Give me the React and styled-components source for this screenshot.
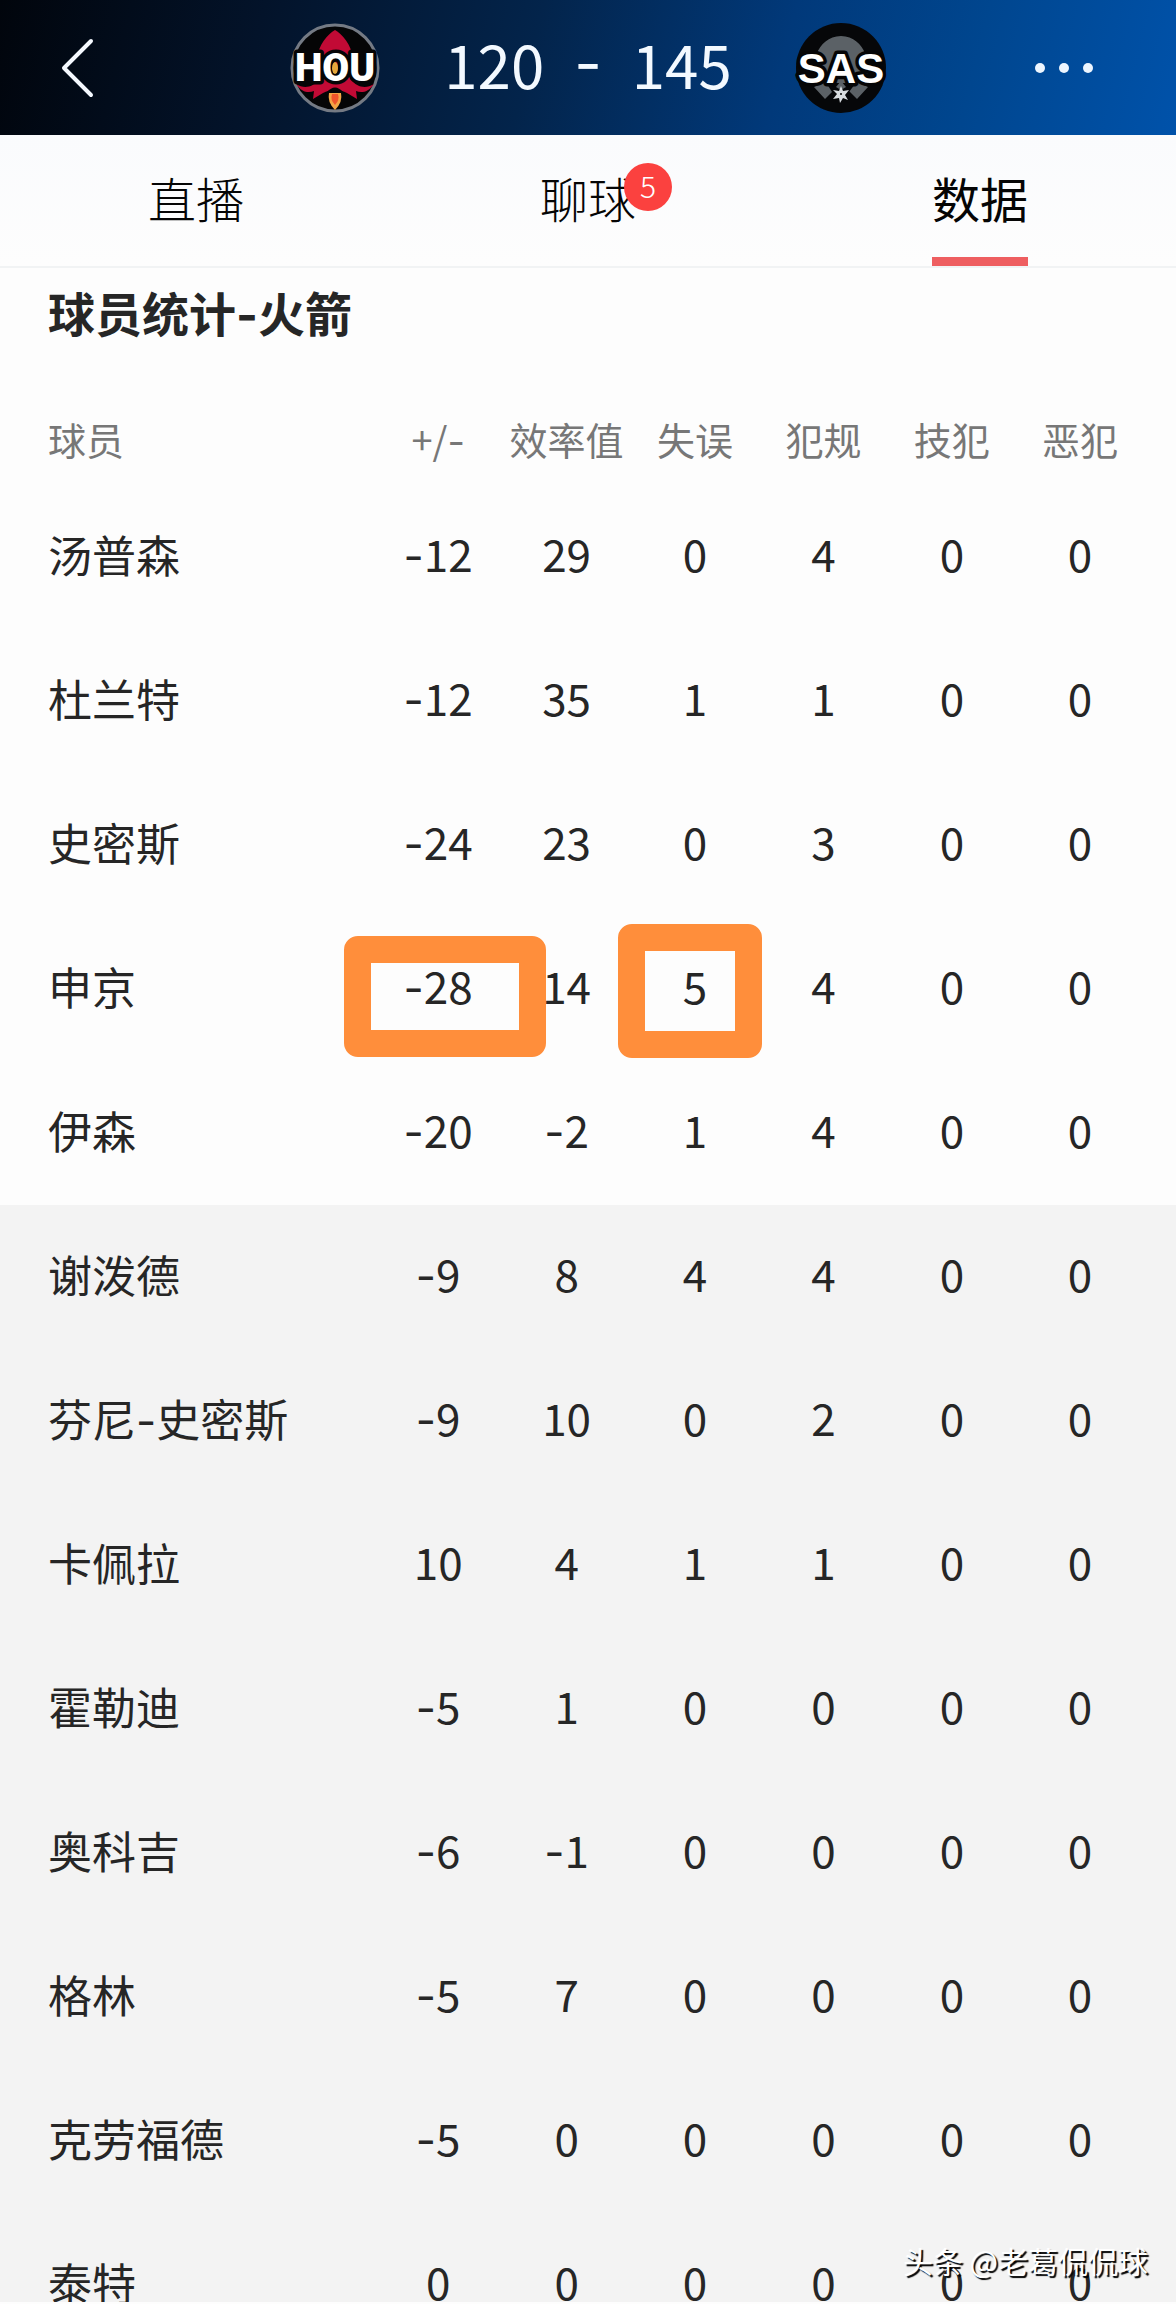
import { Fragment } from 'react';
import styled, { createGlobalStyle } from 'styled-components';

const columns = ['+/-', '效率值', '失误', '犯规', '技犯', '恶犯'];

const starters = [
  { name: '汤普森', stats: [-12, 29, 0, 4, 0, 0] },
  { name: '杜兰特', stats: [-12, 35, 1, 1, 0, 0] },
  { name: '史密斯', stats: [-24, 23, 0, 3, 0, 0] },
  { name: '申京', stats: [-28, 14, 5, 4, 0, 0], marks: { 0: 'wide', 2: 'narrow' } },
  { name: '伊森', stats: [-20, -2, 1, 4, 0, 0] },
];

const bench = [
  { name: '谢泼德', stats: [-9, 8, 4, 4, 0, 0] },
  { name: '芬尼-史密斯', stats: [-9, 10, 0, 2, 0, 0] },
  { name: '卡佩拉', stats: [10, 4, 1, 1, 0, 0] },
  { name: '霍勒迪', stats: [-5, 1, 0, 0, 0, 0] },
  { name: '奥科吉', stats: [-6, -1, 0, 0, 0, 0] },
  { name: '格林', stats: [-5, 7, 0, 0, 0, 0] },
  { name: '克劳福德', stats: [-5, 0, 0, 0, 0, 0] },
  { name: '泰特', stats: [0, 0, 0, 0, 0, 0] },
];

// Sets hyphens in a face with a longer stroke than the CJK one
const Dashed = ({ children }) =>
  String(children)
    .split('-')
    .map((part, i) => (
      <Fragment key={i}>
        {i > 0 && <Dash>-</Dash>}
        {part}
      </Fragment>
    ));

const RocketsLogo = () => (
  <Logo viewBox="0 0 90 90" role="img" aria-label="HOU">
    <circle cx="45" cy="45" r="43" fill="#050506" stroke="#747a84" strokeWidth="3" />
    <path
      d="M45 7C38 11 28 22 27 36L30 56C22 65 14 66 6 61C12 70 19 70 24 68L23 76L33 70C40 66 50 66 57 70L67 76L66 68C71 70 78 70 84 61C76 66 68 65 60 56L63 36C62 22 52 11 45 7Z"
      fill="#c20a35"
    />
    <path d="M37 69Q45 60 53 69Z" fill="#050506" />
    <path d="M39 70H51Q53 79 45 87Q37 79 39 70Z" fill="#f5a545" />
    <path d="M42 71H48Q50 77 45 82Q40 77 42 71Z" fill="#f0552b" />
    <RocketsText x="45" y="58">HOU</RocketsText>
    <ellipse cx="45" cy="45" rx="3" ry="6" fill="#e5a83c" />
  </Logo>
);

const SpursLogo = () => (
  <Logo viewBox="0 0 90 90" role="img" aria-label="SAS">
    <circle cx="45" cy="45" r="45" fill="#060709" />
    <path
      d="M22 62C13 43 20 14 45 13C70 14 77 43 68 62L72 64L61 76L53 68L58 60H32L37 68L29 76L18 64Z"
      fill="#5b6166"
    />
    <path d="M31 61H59L53 69L45 78L36 69Z" fill="#060709" />
    <SpursText x="45" y="60">SAS</SpursText>
    <path d="M40 64L45 58L50 64L45 67Z" fill="#5b6166" />
    <path
      d="M45 63L47 68L53 67L49 72L52 77L47 75L44 80L43 75L37 76L41 71L37 67L43 68Z"
      fill="#d9dde0"
    />
    <circle cx="45" cy="71" r="1" fill="#060709" />
  </Logo>
);

const PlayerRow = ({ player }) => (
  <tr>
    <NameCell scope="row">
      <Dashed>{player.name}</Dashed>
    </NameCell>
    {player.stats.map((value, i) => (
      <StatCell key={columns[i]} $mark={player.marks?.[i]}>
        <Dashed>{value}</Dashed>
      </StatCell>
    ))}
  </tr>
);

const App = () => {
  return (
    <Screen>
      <GlobalStyle />
      <TopBar>
        <IconButton aria-label="返回">
          <BackIcon viewBox="0 0 34 60">
            <path d="M31 3L4 30L31 57" />
          </BackIcon>
        </IconButton>
        <Match>
          <RocketsLogo />
          <Score>
            <span>120</span>
            <Dash>-</Dash>
            <span>145</span>
          </Score>
          <SpursLogo />
        </Match>
        <IconButton aria-label="更多">
          <MoreIcon viewBox="0 0 60 12">
            <circle cx="6" cy="6" r="5" />
            <circle cx="30" cy="6" r="5" />
            <circle cx="54" cy="6" r="5" />
          </MoreIcon>
        </IconButton>
      </TopBar>
      <Tabs>
        <Tab>
          <TabLabel>直播</TabLabel>
        </Tab>
        <Tab>
          <TabLabel>
            聊球
            <Badge>5</Badge>
          </TabLabel>
        </Tab>
        <Tab aria-current="page">
          <TabLabel $active>数据</TabLabel>
        </Tab>
      </Tabs>
      <Content>
        <Title>
          <Dashed>球员统计-火箭</Dashed>
        </Title>
        <StatsTable>
          <colgroup>
            <NameCol />
            <col span={5} />
            <LastCol />
          </colgroup>
          <thead>
            <tr>
              <HeadCell scope="col">球员</HeadCell>
              {columns.map((column) => (
                <HeadCell key={column} scope="col">
                  <Dashed>{column}</Dashed>
                </HeadCell>
              ))}
            </tr>
          </thead>
          <Group>
            {starters.map((player) => (
              <PlayerRow key={player.name} player={player} />
            ))}
          </Group>
          <Group $shaded>
            {bench.map((player) => (
              <PlayerRow key={player.name} player={player} />
            ))}
          </Group>
        </StatsTable>
      </Content>
      <Watermark>头条 @老葛侃侃球</Watermark>
    </Screen>
  );
};

export default App;

// Styled Components
const GlobalStyle = createGlobalStyle`
  * {
    box-sizing: border-box;
  }

  body {
    margin: 0;
    background: #fdfdfd;
    color: #262626;
    font-family: 'Noto Sans CJK SC', sans-serif;
  }
`;

const Screen = styled.div`
  position: relative;
  display: flex;
  flex-direction: column;
  height: 100vh;
  padding-bottom: 2px;
  overflow: hidden;
`;

const TopBar = styled.header`
  display: flex;
  flex-shrink: 0;
  align-items: center;
  justify-content: space-between;
  height: 135px;
  padding: 0 60px;
  background: linear-gradient(104deg, #01050c 0%, #03132a 22%, #03244b 45%, #01397a 66%, #00468f 82%, #0052aa 100%);
`;

const IconButton = styled.button`
  display: flex;
  width: 84px;
  padding: 0;
  border: none;
  background: none;
  cursor: pointer;

  &:last-child {
    justify-content: flex-end;
    padding-right: 22px;
  }
`;

const BackIcon = styled.svg`
  width: 34px;
  height: 60px;
  fill: none;
  stroke: #f5f9ff;
  stroke-width: 4;
  stroke-linecap: round;
  stroke-linejoin: round;
`;

const MoreIcon = styled.svg`
  width: 60px;
  height: 12px;
  fill: #edf6ff;
`;

const Match = styled.div`
  display: flex;
  align-items: center;
  gap: 64px;
`;

const Logo = styled.svg`
  width: 90px;
  height: 90px;
  overflow: visible;
`;

const LogoText = styled.text`
  text-anchor: middle;
  fill: #fff;
  stroke: #050506;
  stroke-width: 7px;
  stroke-linejoin: round;
  paint-order: stroke;
`;

const RocketsText = styled(LogoText)`
  font-family: Roboto, sans-serif;
  font-size: 39px;
  font-weight: 900;
`;

const SpursText = styled(LogoText)`
  font-family: 'Liberation Sans', sans-serif;
  font-size: 42px;
  font-weight: 700;
`;

const Score = styled.div`
  display: flex;
  gap: 30px;
  padding-bottom: 10px;
  color: #f3f9ff;
  font-size: 60px;
  font-weight: 400;
  line-height: 80px;
`;

const Dash = styled.span`
  font-family: Inter, sans-serif;
`;

const Tabs = styled.nav`
  display: flex;
  flex-shrink: 0;
  height: 133px;
  border-bottom: 2px solid #f1f3f4;
  background: linear-gradient(#fafbfd, #fdfdfd);
`;

const Tab = styled.button`
  display: flex;
  flex: 1;
  justify-content: center;
  padding: 0;
  border: none;
  background: none;
  color: #050505;
  font-family: inherit;
  cursor: pointer;
`;

const TabLabel = styled.span`
  position: relative;
  height: 131px;
  border-bottom: 9px solid ${(props) => (props.$active ? '#ee5e60' : 'transparent')};
  font-size: 48px;
  font-weight: ${(props) => (props.$active ? 400 : 300)};
  line-height: 124px;
`;

const Badge = styled.span`
  position: absolute;
  top: 28px;
  right: -36px;
  width: 48px;
  height: 48px;
  border-radius: 50%;
  background: #fb413f;
  color: #fff;
  font-size: 30px;
  line-height: 44px;
  text-align: center;
`;

const Content = styled.main`
  flex: 1;
  min-height: 0;
  overflow: hidden;
`;

const Title = styled.h1`
  height: 128px;
  margin: 0;
  padding: 12px 48px 0;
  font-size: 47px;
  font-weight: 700;
  line-height: 64px;
`;

const StatsTable = styled.table`
  width: 100%;
  border-collapse: collapse;
  table-layout: fixed;
`;

const NameCol = styled.col`
  width: 31.8%;
`;

const LastCol = styled.col`
  width: 13.6%;
`;

const HeadCell = styled.th`
  height: 89px;
  padding: 0 0 4px;
  color: #777;
  font-size: 38px;
  font-weight: 400;
  white-space: nowrap;

  &:first-child {
    padding-left: 48px;
    text-align: left;
  }

  &:last-child {
    padding-right: 32px;
  }
`;

const Group = styled.tbody`
  position: relative;
  z-index: 0;
  background: ${(props) => (props.$shaded ? '#f3f3f3' : '#fdfdfd')};
`;

const NameCell = styled.th`
  height: 144px;
  padding: 0 0 6px 48px;
  font-size: 44px;
  font-weight: 400;
  text-align: left;
  white-space: nowrap;
`;

const markInsets = {
  wide: '19px -44px 4px -30px',
  narrow: '7px -3px 3px -13px',
};

const StatCell = styled.td`
  position: relative;
  padding: 0 0 8px;
  font-size: 44px;
  text-align: center;

  &:last-child {
    padding-right: 32px;
  }

  &::before {
    content: ${(props) => (props.$mark ? "''" : 'none')};
    position: absolute;
    z-index: -1;
    inset: ${(props) => markInsets[props.$mark]};
    border: 27px solid #ff8e3b;
    border-radius: 14px;
  }
`;

const Watermark = styled.div`
  position: absolute;
  right: 28px;
  bottom: 22px;
  color: #fff;
  font-size: 30px;
  line-height: 44px;
  text-shadow: 2px 2px 1px #000;
`;
